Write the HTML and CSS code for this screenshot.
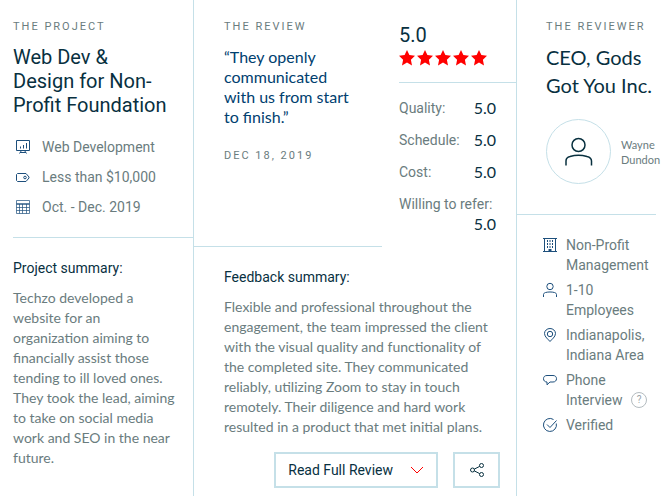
FILE: index.html
```html
<!DOCTYPE html>
<html lang="en">

<head>
    <meta charset="UTF-8">
    <meta name="viewport" content="width=device-width, initial-scale=1.0">
    <title>Web Dev &amp; Design for Non-Profit Foundation</title>
    <link rel="stylesheet" href="styles.css">
</head>

<body>
    <article class="review-card">
        <!-- Project -->
        <section class="project">
            <div class="project-top">
                <div class="label">THE PROJECT</div>
                <h2>Web Dev &amp; Design for Non-Profit Foundation</h2>
                <ul class="project-list">
                    <li>
                        <svg class="icon" viewBox="0 0 16 16">
                            <path d="M1.500 1.500h13v10h-13zM6.500 11.500l-2 3M9.500 11.500l2 3M5 13.500h6M5.500 7.500v2M8.500 6v3.500M11.500 4v5.500" />
                        </svg>
                        <span>Web Development</span>
                    </li>
                    <li>
                        <svg class="icon" viewBox="0 0 16 16">
                            <path d="M2.500 4.500h8.500l3 3.500v1l-3 3.500h-8.500l-1-1v-6z" />
                            <circle cx="10" cy="8.500" r="1.300" />
                        </svg>
                        <span>Less than $10,000</span>
                    </li>
                    <li>
                        <svg class="icon thin" viewBox="0 0 16 16">
                            <path d="M1.500 1.500h13v13h-13zM1.500 4.500h13M1.500 5.500h13M1.500 8.500h13M1.500 11.500h13M4.500 5v9.500M7.500 5v9.500M11.500 5v9.500" />
                        </svg>
                        <span>Oct. - Dec. 2019</span>
                    </li>
                </ul>
            </div>
            <div class="project-summary">
                <h3>Project summary:</h3>
                <p>Techzo developed a website for an organization aiming to financially assist those tending to ill loved ones. They took the lead, aiming to take on social media work and SEO in the near future.</p>
            </div>
        </section>

        <!-- Review -->
        <section class="review">
            <div class="review-top">
                <div class="quote">
                    <div class="label">THE REVIEW</div>
                    <blockquote>“They openly communicated with us from start to finish.”</blockquote>
                    <div class="label date">DEC 18, 2019</div>
                </div>
                <div class="scores">
                    <div class="total">
                        <div class="total-value">5.0</div>
                        <svg class="stars" viewBox="0 0 90 16" role="img" aria-label="5 stars">
                            <defs>
                                <path id="star" d="M8 0l2.400 5.100 5.600.7-4.100 3.900 1.100 5.700L8 12.600l-5 2.800 1.100-5.700L0 5.800l5.600-.7z" />
                            </defs>
                            <use href="#star" />
                            <use href="#star" x="18" />
                            <use href="#star" x="36" />
                            <use href="#star" x="54" />
                            <use href="#star" x="72" />
                        </svg>
                    </div>
                    <dl class="score-list">
                        <div><dt>Quality:</dt><dd>5.0</dd></div>
                        <div><dt>Schedule:</dt><dd>5.0</dd></div>
                        <div><dt>Cost:</dt><dd>5.0</dd></div>
                        <div><dt>Willing to refer:</dt><dd>5.0</dd></div>
                    </dl>
                </div>
            </div>
            <div class="feedback">
                <h3>Feedback summary:</h3>
                <p>Flexible and professional throughout the engagement, the team impressed the client with the visual quality and functionality of the completed site. They communicated reliably, utilizing Zoom to stay in touch remotely. Their diligence and hard work resulted in a product that met initial plans.</p>
            </div>
            <div class="actions">
                <button type="button" class="btn btn-read">
                    Read Full Review
                    <svg class="chevron" viewBox="0 0 14 8">
                        <path d="M1 1l6 6 6-6" />
                    </svg>
                </button>
                <button type="button" class="btn btn-share" aria-label="Share">
                    <svg class="share" viewBox="0 0 16 16">
                        <circle cx="3.500" cy="8" r="2" />
                        <circle cx="12.500" cy="3.500" r="2" />
                        <circle cx="12.500" cy="12.500" r="2" />
                        <path d="M5.300 7.100l5.400-2.700M5.300 8.900l5.400 2.700" />
                    </svg>
                </button>
            </div>
        </section>

        <!-- Reviewer -->
        <section class="reviewer">
            <div class="reviewer-top">
                <div class="label">THE REVIEWER</div>
                <h2>CEO, Gods Got You Inc.</h2>
                <div class="person">
                    <div class="avatar">
                        <svg viewBox="0 0 30 30">
                            <circle cx="14.500" cy="8" r="6.500" />
                            <path d="M2 28.500v-4.500c0-2.500 2-4 4-4.500c5-1.500 12-1.500 17 0c2 .5 4.500 2 4.500 4.500v4.500" />
                        </svg>
                    </div>
                    <div class="name">Wayne Dundon</div>
                </div>
            </div>
            <ul class="reviewer-list">
                <li>
                    <svg class="icon" viewBox="0 0 16 16">
                        <path d="M2.500 14.500v-13h11v13M1 1.500h14M1 14.500h14" />
                        <path stroke-dasharray="2 1" d="M5.500 3v9M8 3v8M10.500 3v9" />
                        <path stroke-width="3" d="M8 12v3" />
                    </svg>
                    <span>Non-Profit Management</span>
                </li>
                <li>
                    <svg class="icon" viewBox="0 0 16 16">
                        <circle cx="8" cy="4.500" r="3.200" />
                        <path d="M1.500 15v-2.500c0-1 1-1.700 2-2c3-.7 6-.7 9 0c1 .3 2 1 2 2v2.500" />
                    </svg>
                    <span>1-10 Employees</span>
                </li>
                <li>
                    <svg class="icon" viewBox="0 0 16 16">
                        <path d="M8 14.500c-1.500-2-5.500-4.500-5.500-8a5.500 5 0 0 1 11 0c0 3.500-4 6-5.500 8z" />
                        <circle cx="8" cy="7" r="2.700" />
                    </svg>
                    <span>Indianapolis, Indiana Area</span>
                </li>
                <li>
                    <svg class="icon" viewBox="0 0 16 16">
                        <path d="M5 3.500h6c2.200 0 3.500 1.300 3.500 3.200s-1.300 3.300-3.500 3.300h-3l-3 2.800v-2.800c-2.200 0-3.500-1.400-3.500-3.300s1.300-3.200 3.500-3.200z" />
                    </svg>
                    <span>Phone Interview <button type="button" class="help" aria-label="Help">?</button></span>
                </li>
                <li>
                    <svg class="icon" viewBox="0 0 16 16">
                        <path d="M14.300 6.500a6.500 6.500 0 1 1-2.800-4M5 7.500l3 3 6.500-7" />
                    </svg>
                    <span>Verified</span>
                </li>
            </ul>
        </section>
    </article>
</body>

</html>
```

FILE: styles.css
```css
* {
    box-sizing: border-box;
}

body {
    margin: 0;
    background-color: #fff;
    color: #6a7c7e;
    font-family: Roboto, sans-serif;
    font-size: 14px;
    line-height: 20px;
}

h2,
h3,
p,
ul,
dl,
dd,
blockquote {
    margin: 0;
    padding: 0;
}

ul {
    list-style: none;
}

.review-card {
    display: grid;
    grid-template-columns: minmax(0, 193fr) minmax(0, 324fr) minmax(0, 155fr);
    min-height: 100vh;
}

.label {
    font-size: 11px;
    line-height: 16px;
    letter-spacing: 2px;
}

h2 {
    color: #08303f;
    font-size: 20px;
    font-weight: 400;
    line-height: 24px;
}

h3 {
    margin-bottom: 10px;
    color: #08303f;
    font-size: 14px;
    font-weight: 400;
    line-height: 20px;
}

p {
    font-family: Lato, sans-serif;
}

.icon {
    flex: none;
    width: 16px;
    height: 16px;
    fill: none;
    stroke: #1d4f7c;
    stroke-width: 1;
}

.thin {
    stroke-width: 0.7;
}

/* Project */
.project {
    padding-left: 13px;
}

.project-top {
    height: 238px;
    padding: 19px 22px 0 0;
    border-bottom: 1px solid #c5e0e8;
}

.project h2 {
    margin-top: 10px;
}

.project-list {
    margin-top: 20px;
}

.project-list li {
    display: flex;
    align-items: center;
    gap: 11px;
    margin-bottom: 10px;
    padding-left: 2px;
}

.project-summary {
    padding: 20px 16px 0 0;
}

/* Review */
.review {
    border-left: 1px solid #c5e0e8;
    border-right: 1px solid #c5e0e8;
}

.review-top {
    display: grid;
    grid-template-columns: minmax(0, 188fr) minmax(0, 117fr);
    column-gap: 17px;
    height: 247px;
}

.quote {
    padding: 19px 24px 0 30px;
    border-bottom: 1px solid #c5e0e8;
}

blockquote {
    margin: 12px 0 21px;
    color: #00406f;
    font-family: Lato, sans-serif;
    font-size: 16px;
    line-height: 20px;
}

.total {
    height: 83px;
    padding-top: 23px;
    border-bottom: 1px solid #c5e0e8;
}

.total-value {
    color: #08303f;
    font-size: 20px;
    line-height: 24px;
}

.stars {
    display: block;
    width: 90px;
    height: 16px;
    margin-top: 3px;
    fill: #f00;
}

.score-list {
    padding: 15px 20px 0 0;
}

.score-list div {
    display: flex;
    flex-wrap: wrap;
    margin-bottom: 12px;
}

.score-list dd {
    margin-left: auto;
    color: #08303f;
    font-family: Lato, sans-serif;
    font-size: 16px;
}

.feedback {
    padding: 20px 24px 0 30px;
}

.actions {
    display: flex;
    justify-content: flex-end;
    gap: 15px;
    padding: 15px 16px 0 0;
}

.btn {
    display: flex;
    align-items: center;
    height: 36px;
    border: 2px solid #c5e0e8;
    background-color: #fff;
    color: #08303f;
    font-family: Roboto, sans-serif;
    font-size: 14px;
    cursor: pointer;
}

.btn-read {
    gap: 17px;
    padding: 0 12px;
}

.btn-share {
    width: 47px;
    justify-content: center;
    padding: 0;
}

.chevron {
    width: 14px;
    height: 8px;
    fill: none;
    stroke: #f00;
}

.share {
    width: 16px;
    height: 16px;
    fill: none;
    stroke: #08303f;
}

/* Reviewer */
.reviewer-top {
    height: 215px;
    margin-right: 16px;
    padding: 19px 0 0 29px;
    border-bottom: 1px solid #c5e0e8;
    white-space: nowrap;
}

.reviewer h2 {
    margin-top: 8px;
    font-family: Lato, sans-serif;
    line-height: 28px;
    white-space: normal;
}

.person {
    display: flex;
    align-items: center;
    gap: 10px;
    margin-top: 20px;
}

.avatar {
    flex: none;
    display: flex;
    align-items: center;
    justify-content: center;
    width: 65px;
    height: 65px;
    border: 1px solid #c5e0e8;
    border-radius: 50%;
}

.avatar svg {
    width: 30px;
    height: 30px;
    fill: none;
    stroke: #08303f;
    stroke-width: 1.500;
}

.name {
    width: 40px;
    font-family: Lato, sans-serif;
    font-size: 11px;
    line-height: 15px;
    white-space: normal;
}

.reviewer-list {
    padding: 20px 20px 0 25px;
}

.reviewer-list li {
    display: flex;
    gap: 8px;
    margin-bottom: 5px;
}

.reviewer-list .icon {
    margin-top: 2px;
}

.reviewer-list span {
    width: 86px;
}

.help {
    width: 16px;
    height: 16px;
    margin-left: 5px;
    padding: 0;
    border: 1px solid #b4bcc0;
    border-radius: 50%;
    background-color: #fff;
    color: #9aa4a8;
    font-family: Roboto, sans-serif;
    font-size: 10px;
    line-height: 14px;
    vertical-align: text-bottom;
}
```
